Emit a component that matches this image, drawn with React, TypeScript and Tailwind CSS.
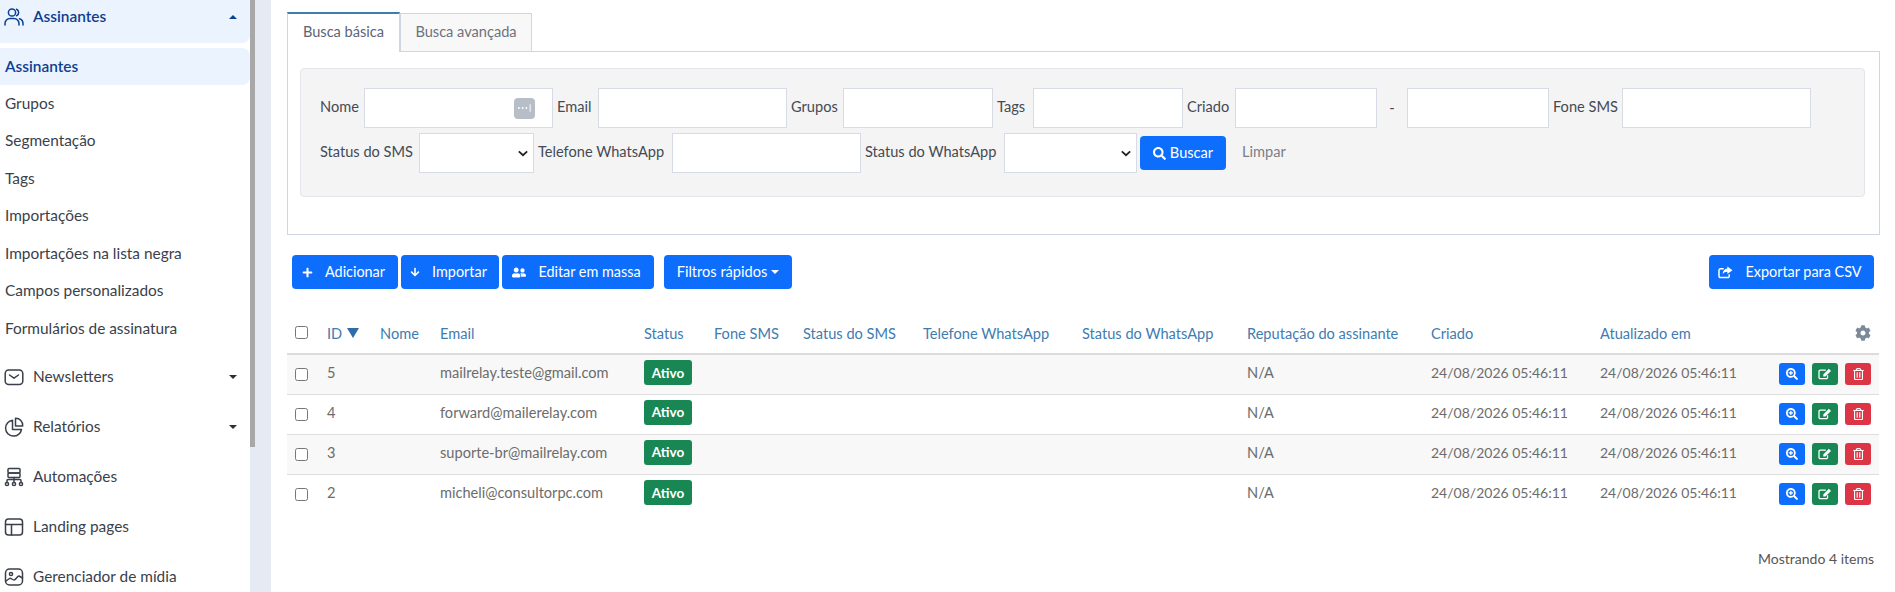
import { FaArrowDown, FaCog, FaPlus, FaRegTrashAlt, FaSearch, FaSearchPlus, FaUserFriends } from "react-icons/fa";

const font = "font-['Lato','Noto_Sans',sans-serif]";

function IconBox({ children }: { children: React.ReactNode }) {
  return (
    <svg viewBox="0 0 20 20" fill="none" stroke="currentColor" strokeWidth="1.5" strokeLinecap="round" strokeLinejoin="round" className="w-[20px] h-[20px] shrink-0">
      {children}
    </svg>
  );
}

const UsersIcon = () => (
  <IconBox>
    <circle cx="8" cy="5.5" r="3.6" />
    <path d="M12.5 2.2a3.6 3.6 0 0 1 0 6.6" />
    <path d="M1 18v-1.5a5 5 0 0 1 5-5h4a5 5 0 0 1 5 5V18" />
    <path d="M15.5 11.8a5 5 0 0 1 3.5 4.7V18" />
  </IconBox>
);
const MailIcon = () => (
  <IconBox>
    <rect x="1.2" y="3" width="17.6" height="14.5" rx="3.5" />
    <path d="M5.5 8l4.5 3.2L14.5 8" />
  </IconBox>
);
const PieIcon = () => (
  <IconBox>
    <path d="M8.5 3.2a8 8 0 1 0 9 9.3H8.5z" />
    <path d="M11.5 1.3a7 7 0 0 1 7.2 7.7h-7.2z" />
  </IconBox>
);
const FlowIcon = () => (
  <IconBox>
    <rect x="4" y="1.5" width="12" height="4.5" rx="1" />
    <rect x="4" y="6" width="12" height="4.5" rx="1" />
    <path d="M10 10.5v4M3 15v-1.5a1 1 0 0 1 1-1h12a1 1 0 0 1 1 1V15" />
    <circle cx="3" cy="17" r="1.6" />
    <circle cx="10" cy="17" r="1.6" />
    <circle cx="17" cy="17" r="1.6" />
  </IconBox>
);
const LayoutIcon = () => (
  <IconBox>
    <rect x="1.5" y="2" width="17" height="16" rx="3" />
    <path d="M1.5 7.5h17M7.5 7.5V18" />
  </IconBox>
);
const ImageIcon = () => (
  <IconBox>
    <rect x="1.5" y="2" width="17" height="16" rx="4" />
    <circle cx="7" cy="7" r="1.6" />
    <path d="M2 14l3.5-2.5c1.5-1 2.5 1.5 4.5 1.5s3-4 5-4l3.5 2" />
  </IconBox>
);

const EditIcon = () => (
  <svg viewBox="0 0 16 14" className="w-[14px] h-[12px]">
    <path d="M11 8.5V11a1.5 1.5 0 0 1-1.5 1.5h-7A1.5 1.500 0 0 1 1 11V4a1.500 1.500 0 0 1 1.500-1.500H9" fill="none" stroke="currentColor" strokeWidth="1.5" />
    <path d="M6 7.5L12.5 1 15 3.5 8.5 10H6z" fill="currentColor" />
  </svg>
);

const ShareIcon = () => (
  <svg viewBox="0 0 16 14" className="w-[15px] h-[13px]">
    <path d="M12 9v2a1.5 1.5 0 0 1-1.5 1.5h-8A1.5 1.5 0 0 1 1 11V4.500A1.500 1.500 0 0 1 2.500 3H6" fill="none" stroke="currentColor" strokeWidth="1.6" />
    <path d="M10 0.5L15.5 4.5 10 8.500V6.200C7.500 6.200 6 7 5 9c0-3.500 1.800-6 5-6.200z" fill="currentColor" />
  </svg>
);

function Caret({ up }: { up?: boolean }) {
  return (
    <span
      className={
        up
          ? "w-0 h-0 border-x-[4px] border-x-transparent border-b-[4px] border-b-[#0b3f91]"
          : "w-0 h-0 border-x-[4px] border-x-transparent border-t-[4px] border-t-[#2b2f3a]"
      }
    />
  );
}

const subItems = ["Grupos", "Segmentação", "Tags", "Importações", "Importações na lista negra", "Campos personalizados", "Formulários de assinatura"];

function Sidebar() {
  return (
    <aside className="w-[250px] h-[592px] shrink-0 bg-white text-[15.4px] text-[#3a3f4b]">
      <div className="h-[43px] bg-[#ebf3fe] rounded-br-lg flex items-center pl-[4px] pr-[13px] pb-[9px] text-[#0b3f91] font-semibold">
        <UsersIcon />
        <span className="ml-[9px] flex-1">Assinantes</span>
        <Caret up />
      </div>
      <div className="mt-[5px] h-[37px] bg-[#ebf3fe] rounded-r-lg flex items-center pl-[5px] text-[#0b3f91] font-semibold">Assinantes</div>
      {subItems.map((item) => (
        <div key={item} className="h-[37.5px] flex items-center pl-[5px] pb-[1px]">
          {item}
        </div>
      ))}
      <div className="mt-[4px]">
        <SideLink label="Newsletters" icon={<MailIcon />} caret />
        <SideLink label="Relatórios" icon={<PieIcon />} caret />
        <SideLink label="Automações" icon={<FlowIcon />} />
        <SideLink label="Landing pages" icon={<LayoutIcon />} />
        <SideLink label="Gerenciador de mídia" icon={<ImageIcon />} />
      </div>
    </aside>
  );
}

function SideLink({ label, icon, caret }: { label: string; icon: React.ReactNode; caret?: boolean }) {
  return (
    <div className="h-[50px] flex items-center pl-[4px] pr-[13px]">
      {icon}
      <span className="ml-[9px] flex-1">{label}</span>
      {caret && <Caret />}
    </div>
  );
}

function Label({ w, children }: { w: string; children: React.ReactNode }) {
  return <span className={`${w} shrink-0 -mt-[3px] whitespace-nowrap text-[#444a55] text-[14.6px]`}>{children}</span>;
}

function Field({ w, children }: { w: string; children?: React.ReactNode }) {
  return <div className={`${w} h-[40px] shrink-0 bg-white border border-[#d6dbe6] flex items-center justify-end`}>{children}</div>;
}

function Select({ w }: { w: string }) {
  return (
    <div className={`${w} h-[40px] shrink-0 bg-white border border-[#d6dbe6] flex items-center justify-end pr-[5px]`}>
      <svg viewBox="0 0 12 8" className="w-[10px] h-[7px]" fill="none" stroke="#222" strokeWidth="2.2">
        <path d="M1 1.5l5 4.5 5-4.5" />
      </svg>
    </div>
  );
}

function SearchPanel() {
  return (
    <div>
      <div className="flex items-end h-[39px] text-[14.6px]">
        <div className="w-[113px] h-[40px] -mb-[1px] pb-[2px] bg-white border-x border-[#cdd6e3] border-t-2 border-t-[#3e7cb1] flex items-center justify-center text-[#5d6477] relative z-10">Busca básica</div>
        <div className="w-[132px] h-[38px] pb-[2px] bg-[#f8f8f8] border-x border-t border-[#cdd6e3] flex items-center justify-center text-[#6d7280]">Busca avançada</div>
      </div>
      <div className="h-[184px] border border-[#cdd6e3] pt-[16px] pl-[12px] pr-[14px]">
        <div className="h-[129px] bg-[#f4f4f4] border border-[#e3e5ea] rounded pl-[19px] pt-[19px]">
          <div className="flex items-center gap-[4px]">
            <Label w="w-[40px]">Nome</Label>
            <Field w="w-[189px]">
              <span className="w-[21px] h-[21px] rounded bg-[#b8bec8] mr-[17px] flex items-center justify-center">
                <svg viewBox="0 0 16 8" className="w-[15px] h-[8px]" fill="#fff">
                  <circle cx="2" cy="4" r="1" />
                  <circle cx="6" cy="4" r="1" />
                  <circle cx="10" cy="4" r="1" />
                  <rect x="13.5" y="0" width="1" height="8" />
                </svg>
              </span>
            </Field>
            <Label w="w-[37px]">Email</Label>
            <Field w="w-[189px]" />
            <Label w="w-[48px]">Grupos</Label>
            <Field w="w-[150px]" />
            <Label w="w-[32px]">Tags</Label>
            <Field w="w-[150px]" />
            <Label w="w-[44px]">Criado</Label>
            <Field w="w-[142px]" />
            <span className="w-[22px] shrink-0 text-center text-[#444a55] text-[14.6px]">-</span>
            <Field w="w-[142px]" />
            <Label w="w-[65px]">Fone SMS</Label>
            <Field w="w-[189px]" />
          </div>
          <div className="flex items-center gap-[4px] mt-[5px]">
            <Label w="w-[95px]">Status do SMS</Label>
            <Select w="w-[115px]" />
            <Label w="w-[130px]">Telefone WhatsApp</Label>
            <Field w="w-[189px]" />
            <Label w="w-[135px]">Status do WhatsApp</Label>
            <Select w="w-[133px]" />
            <button className="w-[86px] h-[34px] ml-[-1px] bg-[#0d6efd] rounded text-white text-[14.6px] flex items-center justify-center gap-[4px]">
              <FaSearch className="w-[13px] h-[13px]" />
              Buscar
            </button>
            <span className="ml-[12px] -mt-[3px] text-[#7b7f87] text-[14.6px]">Limpar</span>
          </div>
        </div>
      </div>
    </div>
  );
}

function BlueButton({ w, icon, label }: { w: string; icon?: React.ReactNode; label: string }) {
  return (
    <button className={`${w} gap-[12px] h-[34px] pr-[3px] bg-[#0d6efd] rounded text-white text-[14.4px] flex items-center justify-center`}>
      {icon}
      {label}
    </button>
  );
}

function Toolbar() {
  return (
    <div className="flex items-center mt-[20px] pl-[5px] pr-[6px]">
      <div className="flex gap-[3px]">
        <BlueButton w="w-[106px]" icon={<FaPlus className="w-[11px] h-[11px]" />} label="Adicionar" />
        <BlueButton w="w-[98px]" icon={<FaArrowDown className="w-[10px] h-[10px]" />} label="Importar" />
        <BlueButton w="w-[152px]" icon={<FaUserFriends className="w-[14px] h-[13px]" />} label="Editar em massa" />
      </div>
      <button className="ml-[10px] w-[128px] h-[34px] bg-[#0d6efd] rounded text-white text-[14.6px] flex items-center justify-center gap-[4px]">
        Filtros rápidos
        <span className="w-0 h-0 border-x-[4px] border-x-transparent border-t-[4px] border-t-white" />
      </button>
      <div className="ml-auto">
        <BlueButton w="w-[165px]" icon={<ShareIcon />} label="Exportar para CSV" />
      </div>
    </div>
  );
}

const columns = ["Nome", "Email", "Status", "Fone SMS", "Status do SMS", "Telefone WhatsApp", "Status do WhatsApp", "Reputação do assinante", "Criado", "Atualizado em"];
const emails = [
  { id: 5, email: "mailrelay.teste@gmail.com" },
  { id: 4, email: "forward@mailerelay.com" },
  { id: 3, email: "suporte-br@mailrelay.com" },
  { id: 2, email: "micheli@consultorpc.com" },
];
const date = "24/08/2026 05:46:11";

function CheckBox() {
  return <span className="block w-[13px] h-[13px] bg-white border border-[#767676] rounded-[2.5px]" />;
}

function RowAction({ color, children }: { color: string; children: React.ReactNode }) {
  return <span className={`${color} w-[26px] h-[22px] rounded-[3px] text-white flex items-center justify-center`}>{children}</span>;
}

function SubscribersTable() {
  return (
    <table className="w-[1592px] table-fixed border-collapse mt-[15px] text-[14.6px]">
      <colgroup>
        <col className="w-[31px]" />
        <col className="w-[54px]" />
        <col className="w-[60px]" />
        <col className="w-[204px]" />
        <col className="w-[70px]" />
        <col className="w-[89px]" />
        <col className="w-[120px]" />
        <col className="w-[159px]" />
        <col className="w-[165px]" />
        <col className="w-[184px]" />
        <col className="w-[169px]" />
        <col className="w-[178px]" />
        <col className="w-[109px]" />
      </colgroup>
      <thead>
        <tr className="h-[50px] border-b-[2px] border-[#dcdcdc] text-[#3e7cb1] text-left">
          <th className="pl-[8px] pt-[8px] font-normal">
            <CheckBox />
          </th>
          <th className="pl-[9px] pt-[10px] font-normal">
            <span className="flex items-center gap-[5px]">
              ID
              <span className="w-0 h-0 border-x-[6px] border-x-transparent border-t-[10px] border-t-[#2f6ca8]" />
            </span>
          </th>
          {columns.map((col) => (
            <th key={col} className="pl-[8px] pt-[10px] font-normal truncate">
              {col}
            </th>
          ))}
          <th className="pr-[8px] pt-[8px] font-normal">
            <FaCog className="ml-auto w-[16px] h-[16px] text-[#7b8a99]" />
          </th>
        </tr>
      </thead>
      <tbody className="text-[#6c6c6c]">
        {emails.map((row, i) => (
          <tr key={row.id} className={`h-[40px] ${i % 2 === 0 ? "bg-[#f8f8f8]" : ""} ${i < 3 ? "border-b border-[#dedede]" : ""}`}>
            <td className="pl-[8px]">
              <CheckBox />
            </td>
            <td className="pl-[9px] pb-[3px]">{row.id}</td>
            <td />
            <td className="pl-[8px] pb-[3px] truncate">{row.email}</td>
            <td className="pl-[8px]">
              <span className="w-[48px] h-[25px] -mt-[3px] bg-[#198754] rounded-[3px] text-white text-[13.5px] font-bold flex items-center justify-center">Ativo</span>
            </td>
            <td />
            <td />
            <td />
            <td />
            <td className="pl-[8px] pb-[3px]">N/A</td>
            <td className="pl-[8px] pb-[3px] text-[14px]">{date}</td>
            <td className="pl-[8px] pb-[3px] text-[14px]">{date}</td>
            <td>
              <div className="flex justify-end gap-[7px] pr-[8px]">
                <RowAction color="bg-[#0d6efd]">
                  <FaSearchPlus className="w-[12px] h-[12px]" />
                </RowAction>
                <RowAction color="bg-[#198754]">
                  <EditIcon />
                </RowAction>
                <RowAction color="bg-[#dc3545]">
                  <FaRegTrashAlt className="w-[11px] h-[12px]" />
                </RowAction>
              </div>
            </td>
          </tr>
        ))}
      </tbody>
    </table>
  );
}

export default function App() {
  return (
    <div className={`${font} flex w-[1895px] h-[592px] overflow-hidden bg-white`}>
      <Sidebar />
      <div className="w-[5px] h-[592px] shrink-0 bg-[#e6eaf3]">
        <div className="h-[447px] bg-[#a8a8a8]" />
      </div>
      <div className="w-[16px] shrink-0 bg-[#e6eaf3]" />
      <main className="flex-1 pl-[16px] pr-[15px] pt-[12px]">
        <SearchPanel />
        <Toolbar />
        <SubscribersTable />
        <p className="mt-[34px] pr-[6px] text-right text-[14px] text-[#555]">Mostrando 4 items</p>
      </main>
    </div>
  );
}
